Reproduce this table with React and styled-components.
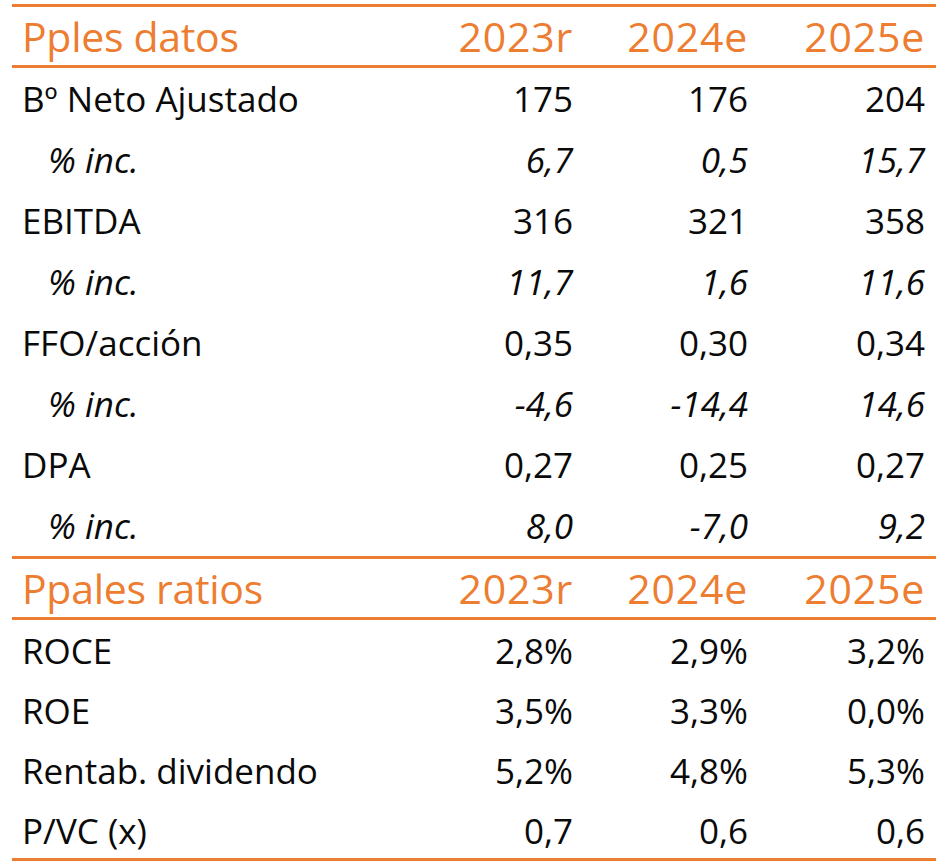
import React from "react";
import styled, { createGlobalStyle } from "styled-components";

const orange = "#ED7D31";

const sections = [
  {
    title: "Pples datos",
    years: ["2023r", "2024e", "2025e"],
    rows: [
      { label: "Bº Neto Ajustado", values: ["175", "176", "204"] },
      { label: "% inc.", values: ["6,7", "0,5", "15,7"], sub: true },
      { label: "EBITDA", values: ["316", "321", "358"] },
      { label: "% inc.", values: ["11,7", "1,6", "11,6"], sub: true },
      { label: "FFO/acción", values: ["0,35", "0,30", "0,34"] },
      { label: "% inc.", values: ["-4,6", "-14,4", "14,6"], sub: true },
      { label: "DPA", values: ["0,27", "0,25", "0,27"] },
      { label: "% inc.", values: ["8,0", "-7,0", "9,2"], sub: true },
    ],
    rowHeight: 61,
  },
  {
    title: "Ppales ratios",
    years: ["2023r", "2024e", "2025e"],
    rows: [
      { label: "ROCE", values: ["2,8%", "2,9%", "3,2%"] },
      { label: "ROE", values: ["3,5%", "3,3%", "0,0%"] },
      { label: "Rentab. dividendo", values: ["5,2%", "4,8%", "5,3%"] },
      { label: "P/VC (x)", values: ["0,7", "0,6", "0,6"] },
    ],
    rowHeight: 60.25,
  },
];

export default function App() {
  return (
    <>
      <GlobalStyle />
      <Table>
        {sections.map(section => (
          <Section key={section.title}>
            <HeaderRow>
              <HeaderLabel>{section.title}</HeaderLabel>
              {section.years.map(y => (
                <HeaderCell key={y}>{y}</HeaderCell>
              ))}
            </HeaderRow>
            {section.rows.map((row, i) => (
              <Row key={i} $h={section.rowHeight} $sub={row.sub}>
                <Label $sub={row.sub}>{row.label}</Label>
                {row.values.map((v, j) => (
                  <Value key={j}>{v}</Value>
                ))}
              </Row>
            ))}
          </Section>
        ))}
        <BottomLine />
      </Table>
    </>
  );
}

const GlobalStyle = createGlobalStyle`
  body {
    margin: 0;
    background: #fff;
    font-family: "Open Sans", "Noto Sans", sans-serif;
    color: #0a0a0a;
  }
`;

const Table = styled.div`
  width: 924px;
  margin: 4px 0 0 12px;
`;

const Section = styled.div`
  border-top: 3px solid ${orange};
`;

const gridCols = `
  display: grid;
  grid-template-columns: 1fr 175px 175px 177px;
  align-items: center;
  padding: 0 11px 0 10px;
`;

const HeaderRow = styled.div`
  ${gridCols}
  height: 58px;
  border-bottom: 3px solid ${orange};
  color: ${orange};
  font-size: 41px;
  line-height: 1;
`;

const HeaderLabel = styled.div`
  text-align: left;
  letter-spacing: -0.3px;
`;

const HeaderCell = styled.div`
  text-align: right;
  letter-spacing: 0.8px;
`;

const Row = styled.div`
  ${gridCols}
  height: ${p => p.$h}px;
  font-size: 35px;
  line-height: 1;
  font-style: ${p => (p.$sub ? "italic" : "normal")};
`;

const Label = styled.div`
  padding-left: ${p => (p.$sub ? "26px" : "0")};
`;

const Value = styled.div`
  text-align: right;
`;

const BottomLine = styled.div`
  border-top: 3px solid ${orange};
  margin-top: -3px;
`;
